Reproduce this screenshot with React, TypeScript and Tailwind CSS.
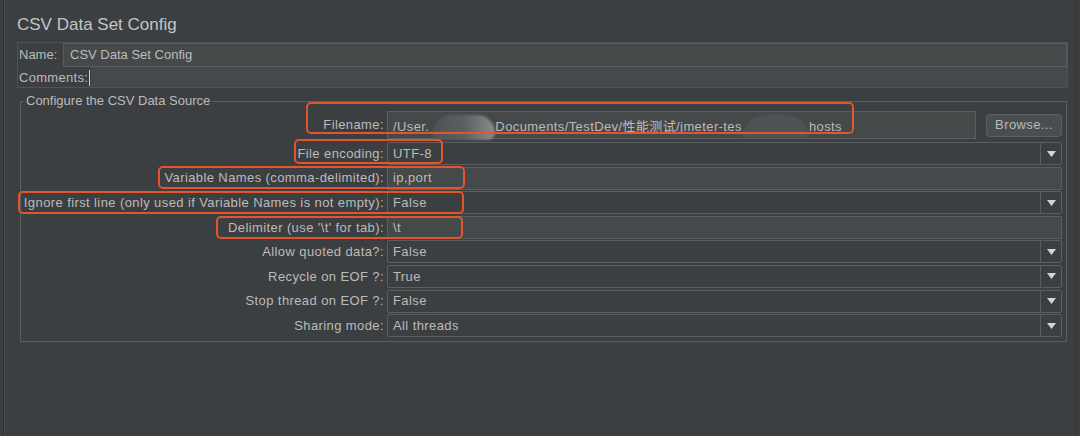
import React from 'react';

const FONT = "font-['Liberation_Sans','Noto_Sans_CJK_SC',sans-serif]";

function Label({ children }: { children: React.ReactNode }) {
  return (
    <div className="w-[366px] shrink-0 whitespace-nowrap pr-[3px] text-right">
      {children}
    </div>
  );
}

function TextField({ value }: { value: string }) {
  return (
    <div className="flex h-full flex-1 items-center border border-[#5b5e60] bg-[#45494a] pl-[5px]">
      {value}
    </div>
  );
}

function Combo({ value }: { value: string }) {
  return (
    <div className="flex h-full flex-1 items-stretch rounded-[2px] border border-[#5b5e60] bg-[#3c3f41]">
      <div className="flex flex-1 items-center pl-[5px]">{value}</div>
      <div className="flex w-[21px] items-center justify-center border-l border-[#5b5e60]">
        <svg width="9" height="6" viewBox="0 0 9 6">
          <path d="M0 0 H9 L4.5 6 Z" fill="#d4d4d4" />
        </svg>
      </div>
    </div>
  );
}

function Row({ label, children }: { label: string; children: React.ReactNode }) {
  return (
    <div className="flex h-[23px] items-center">
      <Label>{label}</Label>
      {children}
    </div>
  );
}

const rows: { label: string; value: string; kind: 'combo' | 'text' }[] = [
  { label: 'File encoding:', value: 'UTF-8', kind: 'combo' },
  { label: 'Variable Names (comma-delimited):', value: 'ip,port', kind: 'text' },
  { label: 'Ignore first line (only used if Variable Names is not empty):', value: 'False', kind: 'combo' },
  { label: "Delimiter (use '\\t' for tab):", value: '\\t', kind: 'text' },
  { label: 'Allow quoted data?:', value: 'False', kind: 'combo' },
  { label: 'Recycle on EOF ?:', value: 'True', kind: 'combo' },
  { label: 'Stop thread on EOF ?:', value: 'False', kind: 'combo' },
  { label: 'Sharing mode:', value: 'All threads', kind: 'combo' },
];

// orange annotation boxes drawn over the form
const marks = [
  'left-[306px] top-[102px] w-[548px] h-[32px]',
  'left-[294px] top-[139px] w-[149px] h-[25px]',
  'left-[158px] top-[166px] w-[307px] h-[23px]',
  'left-[18px] top-[191px] w-[446px] h-[23px]',
  'left-[216px] top-[216px] w-[247px] h-[23px]',
];

export default function App() {
  return (
    <div
      className={`relative flex h-[436px] w-[1080px] overflow-hidden bg-[#3c3f41] text-[13px] text-[#bbbbbb] ${FONT}`}
    >
      <div className="w-[3px] shrink-0" />
      <div className="w-px shrink-0 bg-[#2d2f30]" />
      <div className="w-px shrink-0 bg-[#4a4d4f]" />

      <div className="flex min-w-0 flex-1 flex-col pl-[12px] pr-[7px]">
        <div className="pt-[15px] text-[17px] leading-[20px] text-[#c4c4c4]">
          CSV Data Set Config
        </div>

        <div className="mt-[7px] flex flex-col border border-[#505355]">
          <div className="flex h-[24px] items-stretch">
            <div className="flex w-[45px] items-center pl-[1px]">Name:</div>
            <div className="flex flex-1 items-center border border-[#5b5e60] bg-[#45494a] pl-[6px]">
              CSV Data Set Config
            </div>
          </div>
          <div className="flex h-[20px] items-stretch">
            <div className="flex shrink-0 items-center whitespace-nowrap pl-[1px] pr-[1px] pt-[2px] tracking-[0.3px]">
              Comments:
              <span className="ml-px h-[16px] w-px shrink-0 bg-[#cfcfcf]" />
            </div>
            <div className="flex-1 bg-[#45494a]" />
          </div>
        </div>

        <fieldset className="ml-[3px] mr-[1px] mt-[5px] border border-[#5b5e60] px-0 pb-[4px] pt-[2px]">
          <legend className="ml-[3px] px-[2px] leading-[16px]">Configure the CSV Data Source</legend>

          <div className="flex flex-col pr-[4px] tracking-[0.4px]">
            <div className="flex h-[28px] items-center">
              <Label>Filename:</Label>
              <div className="flex h-full flex-1 items-center whitespace-nowrap border border-[#5b5e60] bg-[#45494a] pl-[5px] pt-[3px]">
                <span>/User.</span>
                <span className="ml-[4px] h-[25px] w-[62px] self-start rounded-t-[30px] rounded-br-[12px] bg-gradient-to-r from-[#505355] via-[#5c5f61] to-[#8a8c8d] blur-[1px]" />
                <span>Documents/TestDev/性能测试/jmeter-tes</span>
                <span className="h-[23px] w-[67px] self-end rounded-t-[28px] bg-[#505355] blur-[1px]" />
                <span>hosts</span>
              </div>
              <div className="ml-[10px] flex h-[23px] w-[76px] items-center justify-center rounded-[4px] border border-[#5e6163] bg-[#4a4e50]">
                Browse...
              </div>
            </div>

            <div className="mt-[3px] flex flex-col gap-[1.6px]">
              {rows.map((r) => (
                <Row key={r.label} label={r.label}>
                  {r.kind === 'combo' ? <Combo value={r.value} /> : <TextField value={r.value} />}
                </Row>
              ))}
            </div>
          </div>
        </fieldset>
      </div>

      <div className="w-px shrink-0 bg-[#333537]" />
      <div className="w-[4px] shrink-0" />

      {marks.map((m) => (
        <div key={m} className={`absolute rounded-[5px] border-2 border-[#e4552a] ${m}`} />
      ))}
    </div>
  );
}
